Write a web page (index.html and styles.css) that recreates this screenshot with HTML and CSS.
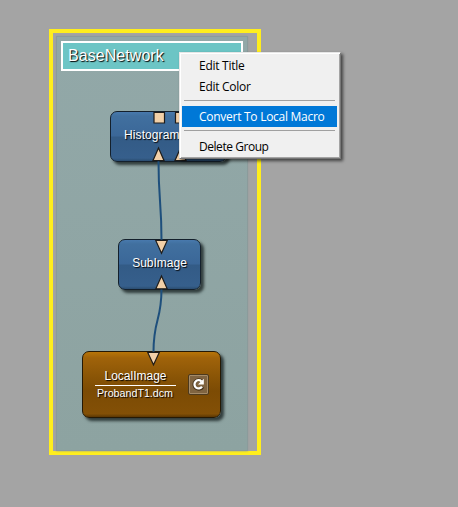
FILE: index.html
```
<!DOCTYPE html>
<html lang="en">
<head>
<meta charset="utf-8">
<title>Network</title>
<link rel="stylesheet" href="styles.css">
</head>
<body>
<main class="canvas">
  <section class="group">
    <div class="group-body">
      <h1 class="group-title"><span>BaseNetwork</span></h1>
    </div>
  </section>

  <div class="node histogram"><span class="label">Histogram</span></div>
  <div class="node subimage"><span class="label">SubImage</span></div>
  <div class="node localimage">
    <div class="local-text">
      <span class="label">LocalImage</span>
      <span class="file">ProbandT1.dcm</span>
    </div>
    <button class="reload" aria-label="Reload">
      <svg width="21" height="21" viewBox="0 0 21 21">
        <path class="reload-shade" d="M13.800 7.200A4.500 4.500 0 1 0 14.600 12.800"/>
        <path class="reload-arc" d="M13.400 7.300A4.100 4.100 0 1 0 14 12.600"/>
        <path class="reload-head" d="M15.800 4.700v5.800H10z"/>
      </svg>
    </button>
  </div>

  <svg class="wires" width="458" height="507" viewBox="0 0 458 507">
    <path class="wire" d="M158.500 161C158.500 200 161.500 202 161.500 240"/>
    <path class="wire" d="M161.500 289C161.500 322 153.500 318 153.500 352"/>
    <g class="port">
      <path d="M154 112.500h10.500v10.500H154z"/>
      <path d="M175.500 112.500h10.500v10.500h-10.500z"/>
      <path d="M158.500 148l5.600 12.700h-11.200z"/>
      <path d="M180.500 148l5.600 12.700h-11.200z"/>
      <path d="M155.700 240.400h11.600l-5.800 12.800z"/>
      <path d="M161.500 276l5.700 12.800h-11.400z"/>
      <path d="M147.700 352.400h11.600l-5.800 12.400z"/>
    </g>
  </svg>

  <ul class="menu">
    <li class="item">Edit Title</li>
    <li class="item">Edit Color</li>
    <li class="separator"></li>
    <li class="item selected">Convert To Local Macro</li>
    <li class="separator"></li>
    <li class="item tight">Delete Group</li>
  </ul>
</main>
</body>
</html>
```
FILE: styles.css
```
* { box-sizing: border-box; }
body { margin: 0; }

.canvas {
  position: relative;
  width: 458px;
  height: 507px;
  overflow: hidden;
  background: #a4a4a4;
  font-family: "Liberation Sans", Arial, sans-serif;
}

.group {
  position: absolute;
  left: 49px;
  top: 29px;
  width: 212px;
  height: 426px;
  padding: 3px 9px 0 3px;
  border: 4px solid #ffee1d;
}
.group-body {
  height: 415px;
  padding: 5px;
  background: linear-gradient(#92a8a8, #8da3a1);
  box-shadow: inset 0 0 0 1px #8b9b9b, 0 0 2px #939c9c;
}
.group-title {
  display: flex;
  align-items: center;
  height: 30px;
  margin: 0;
  padding: 0 0 1px 5px;
  border: 2px solid #fff;
  background: #6cc5c5;
  color: #fff;
  font-size: 16px;
  font-weight: 400;
  letter-spacing: .06px;
  text-shadow: 1px 1px 1px #000;
}

.node {
  position: absolute;
  display: flex;
  border: 1.5px solid #14202c;
  border-radius: 7px;
  color: #fff;
  text-shadow: 1px 1px 1px #000;
  box-shadow: 3px 3px 3px rgba(25, 35, 35, .8);
}
.histogram, .subimage {
  background: linear-gradient(#4879ad 0, #41709f 8%, #3b6798 48%, #335b86 52%, #365f8c 94%, #2a4c70);
}
.histogram {
  left: 110px;
  top: 111px;
  width: 117px;
  height: 51px;
  align-items: center;
  padding: 0 0 3px 13px;
}
.subimage {
  left: 118px;
  top: 239px;
  width: 83px;
  height: 51px;
  align-items: center;
  justify-content: center;
  padding-bottom: 3px;
}
.localimage {
  left: 82px;
  top: 351px;
  width: 139px;
  height: 67px;
  align-items: center;
  justify-content: space-between;
  padding: 0 11px 0 12px;
  border-color: #251904;
  background: linear-gradient(#b87508 0, #a0630a 9%, #8a5506 38%, #7c4b04 60%, #835006 95%, #5b3703);
}
.label { font-size: 12px; line-height: 16px; }
.histogram .label { letter-spacing: .1px; }
.subimage .label { letter-spacing: 0; }
.local-text {
  display: flex;
  flex-direction: column;
  align-items: center;
  width: 81px;
}
.local-text .label {
  width: 100%;
  height: 18px;
  border-bottom: 1px solid #fff;
  text-align: center;
}
.file {
  margin-left: -1px;
  font-size: 10.700px;
  line-height: 15px;
  white-space: nowrap;
}
.reload {
  width: 21px;
  height: 21px;
  padding: 0;
  border: 1px solid #4d391c;
  border-radius: 2px;
  background: #806441;
  box-shadow: inset 0 0 0 1px #a58b69;
}
.reload svg { display: block; margin: -1px; }
.reload-shade { fill: none; stroke: #443119; stroke-width: 3.500; }
.reload-arc { fill: none; stroke: #fff; stroke-width: 2.300; }
.reload-head { fill: #fff; }

.wires { position: absolute; left: 0; top: 0; }
.wire { fill: none; stroke: #1e4f7c; stroke-width: 2; }
.port { fill: #f2d0a8; stroke: #1e1c1a; stroke-width: 1.200; }

.menu {
  position: absolute;
  left: 179px;
  top: 52px;
  width: 162px;
  height: 107px;
  margin: 0;
  padding: 2px;
  border: 1px solid;
  border-color: #e6e6e6 #777 #777 #e6e6e6;
  background: #f0f0f0;
  box-shadow: inset 1px 1px #fff, inset -1px -1px #a4a4a4, 2px 2px 3px rgba(0, 0, 0, .6);
  color: #000;
  font: 12px/21px "Open Sans", "Noto Sans", sans-serif;
  letter-spacing: -.27px;
  list-style: none;
}
.item {
  height: 21px;
  padding-left: 17px;
  white-space: nowrap;
}
.tight { letter-spacing: -.45px; }
.selected {
  width: 155px;
  background: #0078d7;
  color: #fff;
}
.separator {
  height: 9px;
  margin: 0 3px 0 2px;
  background: linear-gradient(#a0a0a0, #a0a0a0) 0 3px / 100% 1px no-repeat;
}
```
